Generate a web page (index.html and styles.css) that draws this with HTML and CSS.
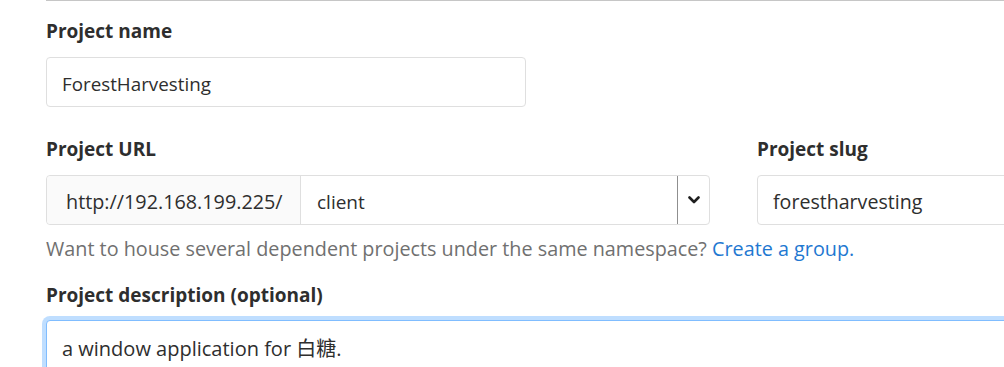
FILE: index.html
```html
<!DOCTYPE html>
<html lang="en">
<head>
<meta charset="UTF-8" />
<meta name="viewport" content="width=device-width, initial-scale=1" />
<title>New project</title>
<link rel="stylesheet" href="styles.css">
</head>
<body>
<form class="project-form">
  <div class="form-group">
    <label class="label" for="project-name">Project name</label>
    <input id="project-name" class="form-control name-input" type="text" value="ForestHarvesting" />
  </div>

  <div class="path-row">
    <div class="form-group">
      <label class="label">Project URL</label>
      <div class="input-group">
        <span class="input-prefix">http://192.168.199.225/</span>
        <div class="namespace-select">
          <span class="namespace-value">client</span>
          <span class="select-toggle">
            <svg width="12" height="8" viewBox="0 0 12 8"><path d="M1.5 1.5 6 6l4.5-4.5" fill="none" stroke="#1f1f1f" stroke-width="2.6" stroke-linecap="round" stroke-linejoin="round"/></svg>
          </span>
        </div>
      </div>
      <p class="help-text">Want to house several dependent projects under the same namespace? <a href="#">Create a group.</a></p>
    </div>
    <div class="form-group">
      <label class="label" for="project-slug">Project slug</label>
      <input id="project-slug" class="form-control" type="text" value="forestharvesting" />
    </div>
  </div>

  <div class="form-group">
    <label class="label" for="project-desc">Project description (optional)</label>
    <textarea id="project-desc" class="form-control desc-input is-focused">a window application for 白糖.</textarea>
  </div>
</form>
</body>
</html>
```

FILE: styles.css
```css
body {
  margin: 0;
  background: #fff;
  color: #2e2e2e;
  font-family: "Open Sans", "Noto Sans CJK SC", sans-serif;
  font-size: 19px;
  overflow: hidden;
}
.project-form {
  margin-left: 46px;
  width: 1400px;
  border-top: 1px solid #c6c6c6;
  padding-top: 18px;
}
.form-group {
  margin-bottom: 30px;
}
.label {
  display: block;
  font-weight: 700;
  font-size: 19px;
  line-height: 24px;
  margin-bottom: 14px;
}
.form-control {
  display: block;
  box-sizing: border-box;
  width: 100%;
  height: 50px;
  padding: 3px 15px 0;
  border: 1px solid #dfdfdf;
  border-radius: 4px;
  font: inherit;
  color: #2e2e2e;
  background: #fff;
}
.name-input {
  width: 480px;
  font-size: 18.8px;
}
.path-row {
  display: grid;
  grid-template-columns: 664px 664px;
  column-gap: 47px;
}
.path-row .form-group {
  margin-bottom: 22px;
}
.input-group {
  display: flex;
  height: 50px;
  box-sizing: border-box;
  border: 1px solid #dfdfdf;
  border-radius: 4px;
}
.input-prefix {
  display: flex;
  align-items: center;
  width: 254px;
  box-sizing: border-box;
  padding: 3px 0 0 19px;
  font-size: 19.8px;
  background: #fafafa;
  border-right: 1px solid #dfdfdf;
  border-radius: 4px 0 0 4px;
  white-space: nowrap;
}
.namespace-select {
  flex: 1;
  display: flex;
  align-items: stretch;
}
.namespace-value {
  flex: 1;
  display: flex;
  align-items: center;
  padding: 3px 0 0 16px;
}
.select-toggle {
  width: 31px;
  display: flex;
  align-items: center;
  justify-content: center;
  border-left: 1px solid #8f8f8f;
}
#project-slug {
  font-size: 19.6px;
}
.help-text {
  margin: 12px 0 0;
  line-height: 24px;
  font-size: 19.8px;
  color: #707070;
  white-space: nowrap;
}
.help-text a {
  color: #1f78d1;
  text-decoration: none;
}
.desc-input {
  height: 120px;
  padding: 16px 15px;
  font-size: 20px;
  line-height: 24px;
  resize: none;
  margin-top: -1px;
}
.is-focused {
  border-color: #80bdff;
  box-shadow: 0 0 0 4px rgba(128, 189, 255, 0.5);
  outline: none;
}
```
